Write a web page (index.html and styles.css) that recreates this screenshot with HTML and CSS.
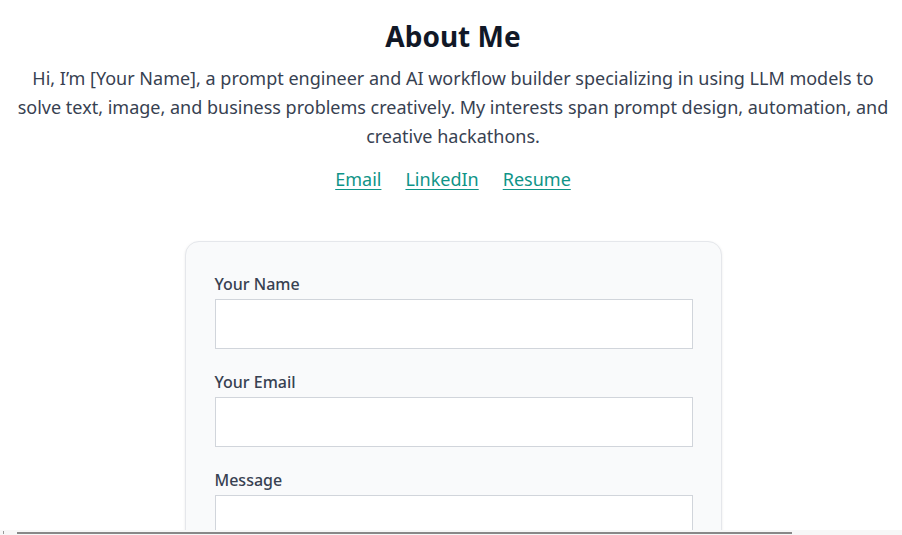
FILE: index.html
```html
<!DOCTYPE html>
<html lang="en">
<head>
<meta charset="utf-8">
<title>About Me</title>
<link rel="stylesheet" href="styles.css">
</head>
<body>
<main class="page">
  <section class="about">
    <h1 class="title">About Me</h1>
    <p class="intro">Hi, I’m [Your Name], a prompt engineer and AI workflow builder specializing in using LLM models to solve text, image, and business problems creatively. My interests span prompt design, automation, and creative hackathons.</p>
    <nav class="links">
      <a href="#" class="link">Email</a>
      <a href="#" class="link">LinkedIn</a>
      <a href="#" class="link">Resume</a>
    </nav>
  </section>
  <form class="card">
    <label class="field">
      <span class="label">Your Name</span>
      <input class="input" type="text">
    </label>
    <label class="field">
      <span class="label">Your Email</span>
      <input class="input" type="email">
    </label>
    <label class="field">
      <span class="label">Message</span>
      <textarea class="input textarea"></textarea>
    </label>
  </form>
</main>
<div class="hscroll"><span class="hscroll-arrow"></span><span class="hscroll-thumb"></span></div>
</body>
</html>
```
FILE: styles.css
```css
* { box-sizing: border-box; }
html, body { margin: 0; padding: 0; background: #ffffff; overflow: hidden; }
body {
  font-family: "Noto Sans", "Open Sans", sans-serif;
  color: #374151;
}
.page {
  padding: 19px 10px 0 14px;
  display: flex;
  flex-direction: column;
  align-items: center;
}
.about {
  text-align: center;
  display: flex;
  flex-direction: column;
  align-items: center;
}
.title {
  margin: 0;
  font-size: 28px;
  line-height: 34px;
  font-weight: 700;
  color: #111827;
}
.intro {
  margin: 11px 0 0;
  font-size: 18px;
  line-height: 29px;
  color: #374151;
}
.links {
  margin-top: 14px;
  display: flex;
  gap: 24px;
}
.link {
  font-size: 18px;
  line-height: 28px;
  color: #0f9488;
  text-decoration: underline;
  text-underline-offset: 3px;
}
.card {
  margin-top: 48px;
  width: 537px;
  background: #f9fafb;
  border: 1px solid #e5e7eb;
  border-radius: 14px;
  box-shadow: 0 1px 3px rgba(0,0,0,0.08);
  padding: 31px 28px 40px 29px;
  display: flex;
  flex-direction: column;
  gap: 22px;
}
.field {
  display: flex;
  flex-direction: column;
  gap: 4px;
}
.label {
  font-size: 16px;
  line-height: 22px;
  font-weight: 500;
  color: #374151;
}
.input {
  display: block;
  width: 100%;
  height: 50px;
  border: 1px solid #d1d5db;
  background: #ffffff;
  border-radius: 0;
  font: inherit;
  padding: 8px 12px;
}
.textarea { height: 120px; resize: none; }
.hscroll {
  position: fixed;
  left: 0;
  right: 0;
  bottom: 0;
  height: 5px;
  background: #f7f7f7;
}
.hscroll-arrow {
  position: absolute;
  left: 3px;
  bottom: 1px;
  width: 1px;
  height: 3px;
  background: #999;
}
.hscroll-thumb {
  position: absolute;
  left: 17px;
  width: 775px;
  bottom: 1px;
  height: 2px;
  background: #888888;
}
```
